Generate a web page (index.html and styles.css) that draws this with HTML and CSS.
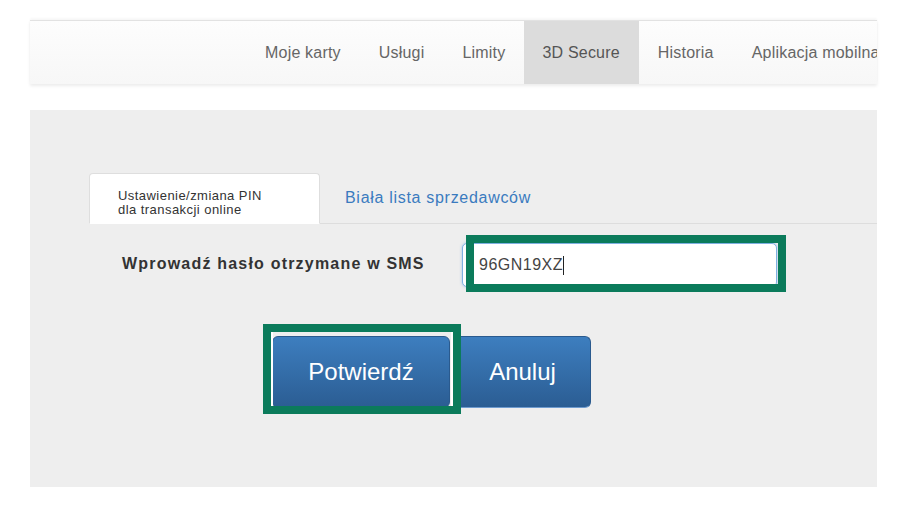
FILE: index.html
```html
<!DOCTYPE html>
<html lang="pl">
<head>
<meta charset="utf-8">
<title>3D Secure</title>
<link rel="stylesheet" href="styles.css">
</head>
<body>
<div class="page">
  <nav class="topnav">
    <ul class="menu">
      <li class="menu-item">Moje karty</li>
      <li class="menu-item">Usługi</li>
      <li class="menu-item">Limity</li>
      <li class="menu-item active">3D Secure</li>
      <li class="menu-item">Historia</li>
      <li class="menu-item">Aplikacja mobilna</li>
    </ul>
  </nav>
  <main class="panel">
    <ul class="tabs">
      <li class="tab tab-active">Ustawienie/zmiana PIN<br>dla transakcji online</li>
      <li class="tab tab-link">Biała lista sprzedawców</li>
    </ul>
    <div class="form-row">
      <label class="label">Wprowadź hasło otrzymane w SMS</label>
      <div class="field">
        <div class="input">96GN19XZ<span class="caret"></span></div>
        <span class="hl hl-input"></span>
      </div>
    </div>
    <div class="actions">
      <div class="confirm-wrap">
        <button class="btn btn-confirm">Potwierdź</button>
        <span class="hl hl-btn"></span>
      </div>
      <button class="btn btn-cancel">Anuluj</button>
    </div>
  </main>
</div>
</body>
</html>
```
FILE: styles.css
```css
* { box-sizing: border-box; }
html, body { margin: 0; padding: 0; background: #ffffff; }
body { font-family: "Liberation Sans", Arial, sans-serif; }

.page {
  width: 847px;
  margin-left: 30px;
}

.topnav {
  margin-top: 20px;
  height: 64px;
  border-top: 1px solid #e2e2e2;
  background: linear-gradient(#fdfdfd, #f7f7f7);
  box-shadow: 0 -2px 2px rgba(0,0,0,0.03), 0 2px 3px rgba(0,0,0,0.08);
  overflow: hidden;
}

.menu {
  list-style: none;
  margin: 0;
  padding: 0 0 0 216px;
  display: flex;
  white-space: nowrap;
}

.menu-item {
  padding: 0 19px;
  height: 63px;
  line-height: 63px;
  font-size: 16px;
  letter-spacing: 0.2px;
  color: #666666;
  flex: none;
}

.menu-item.active {
  background: #dcdcdc;
  color: #555555;
  padding: 0 19px 0 18px;
}

.panel {
  margin-top: 26px;
  background: #eeeeee;
  padding: 63px 0 79px 0;
}

.tabs {
  list-style: none;
  margin: 0 0 0 59px;
  padding: 0;
  display: flex;
  align-items: flex-start;
  height: 51px;
  border-bottom: 1px solid #dddddd;
}

.tab-active {
  width: 231px;
  height: 51px;
  padding: 15px 0 0 28px;
  background: #ffffff;
  border: 1px solid #dedede;
  border-bottom-color: #ffffff;
  border-radius: 4px 4px 0 0;
  font-size: 13px;
  line-height: 14px;
  letter-spacing: 0.45px;
  color: #333333;
}

.tab-link {
  padding: 15px 0 0 25px;
  font-size: 16px;
  line-height: 20px;
  letter-spacing: 0.7px;
  color: #3a7bbf;
}

.form-row {
  display: flex;
  align-items: center;
  margin-top: 19px;
  padding-left: 92px;
}

.label {
  width: 340px;
  font-size: 16px;
  font-weight: bold;
  letter-spacing: 1.2px;
  color: #333333;
  line-height: 20px;
  margin-top: -2px;
}

.field {
  position: relative;
}

.input {
  width: 315px;
  height: 44px;
  padding-left: 16px;
  display: flex;
  align-items: center;
  background: #ffffff;
  border: 1px solid #7fb0e2;
  border-radius: 5px;
  box-shadow: 0 0 3px rgba(80,150,220,0.5);
  font-size: 16px;
  letter-spacing: 0.5px;
  color: #444444;
}

.caret {
  display: inline-block;
  width: 1px;
  height: 19px;
  background: #222222;
}

.hl {
  position: absolute;
  border: 8px solid #0b7b5b;
  pointer-events: none;
}

.hl-input {
  left: 4px;
  top: -8px;
  width: 320px;
  height: 57px;
}

.actions {
  display: flex;
  gap: 2px;
  margin-top: 49px;
  padding-left: 242px;
}

.confirm-wrap {
  position: relative;
}

.btn {
  height: 72px;
  border: 1px solid #2a5a8e;
  border-radius: 6px;
  background: linear-gradient(#3d7ebf, #2b5d93);
  color: #ffffff;
  font-family: "Liberation Sans", Arial, sans-serif;
  font-size: 24px;
  padding: 0;
  display: block;
}

.btn-confirm { width: 178px; }
.btn-cancel { width: 139px; border-bottom-color: #6e9bcf; padding-left: 2px; }

.hl-btn {
  left: -9px;
  top: -12px;
  width: 198px;
  height: 90px;
  box-shadow: inset 2px 0 0 #ffffff, inset -2px 0 0 #ffffff;
}
```
